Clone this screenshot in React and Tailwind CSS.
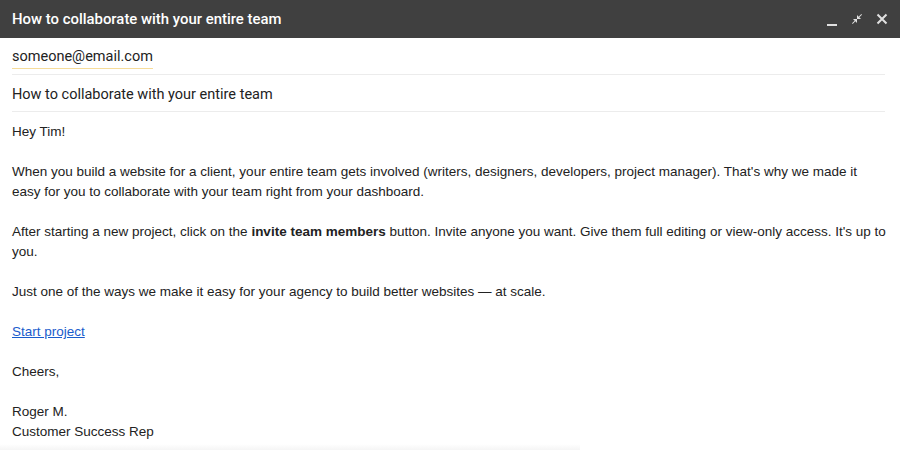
import React from 'react'

function ComposeHeader({ title }) {
  return (
    <div className="flex h-[38px] items-center justify-between bg-[#404040] pl-3 pr-3">
      <h1 className="text-[14.9px] font-medium text-white" style={{ fontFamily: 'Roboto, "Noto Sans", sans-serif' }}>
        {title}
      </h1>
      <div className="flex items-center gap-[13px] text-[#e0e0e0]">
        {/* minimize */}
        <svg width="12" height="12" viewBox="0 0 12 12" className="mt-[4px]">
          <rect x="1" y="9" width="10" height="2" fill="currentColor" />
        </svg>
        {/* exit full screen */}
        <svg width="12" height="12" viewBox="0 0 24 24">
          <path
            fill="currentColor"
            d="M22 3.41 16.71 8.7 20 12h-8V4l3.29 3.29L20.59 2 22 3.41zM3.41 22l5.29-5.29L12 20v-8H4l3.29 3.29L2 20.59 3.41 22z"
          />
        </svg>
        {/* close */}
        <svg width="12" height="12" viewBox="0 0 12 12">
          <path d="M1.5 1.5l9 9M10.5 1.5l-9 9" stroke="currentColor" strokeWidth="2" />
        </svg>
      </div>
    </div>
  )
}

function Field({ children }) {
  return (
    <div className="ml-3 mr-[15px] flex h-[37px] items-center border-b border-[#ececec] pt-[4px]">
      {children}
    </div>
  )
}

export default function App() {
  const title = 'How to collaborate with your entire team'

  return (
    <div className="h-[450px] w-[900px] overflow-hidden bg-white">
      <ComposeHeader title={title} />

      {/* Recipient + subject */}
      <div className="text-[14.5px] text-[#222]" style={{ fontFamily: 'Roboto, "Noto Sans", sans-serif' }}>
        <Field>
          <span className="border-b border-[#f6dc9a] pb-[1px] leading-5">someone@email.com</span>
        </Field>
        <Field>
          <span>{title}</span>
        </Field>
      </div>

      {/* Message body */}
      <div
        className="pl-3 pr-2 pt-[10px] text-[13.5px] leading-5 text-[#222]"
        style={{ fontFamily: '"Liberation Sans", Arial, sans-serif' }}
      >
        <p className="mb-5">Hey Tim!</p>
        <p className="mb-5">
          When you build a website for a client, your entire team gets involved (writers, designers, developers, project manager). That's why we made it
          <br />
          easy for you to collaborate with your team right from your dashboard.
        </p>
        <p className="mb-5">
          After starting a new project, click on the <b>invite team members</b> button. Invite anyone you want. Give them full editing or view-only access. It's up to you.
        </p>
        <p className="mb-5">Just one of the ways we make it easy for your agency to build better websites — at scale.</p>
        <p className="mb-5">
          <a href="#" className="text-[#1a5ccc] underline">Start project</a>
        </p>
        <p className="mb-5">Cheers,</p>
        <p>Roger M.</p>
        <p>Customer Success Rep</p>
      </div>

      {/* faint edge of the signature block */}
      <div className="mt-[2px] h-[8px] w-[580px] bg-gradient-to-b from-white to-[#f2f2f2]" />
    </div>
  )
}
